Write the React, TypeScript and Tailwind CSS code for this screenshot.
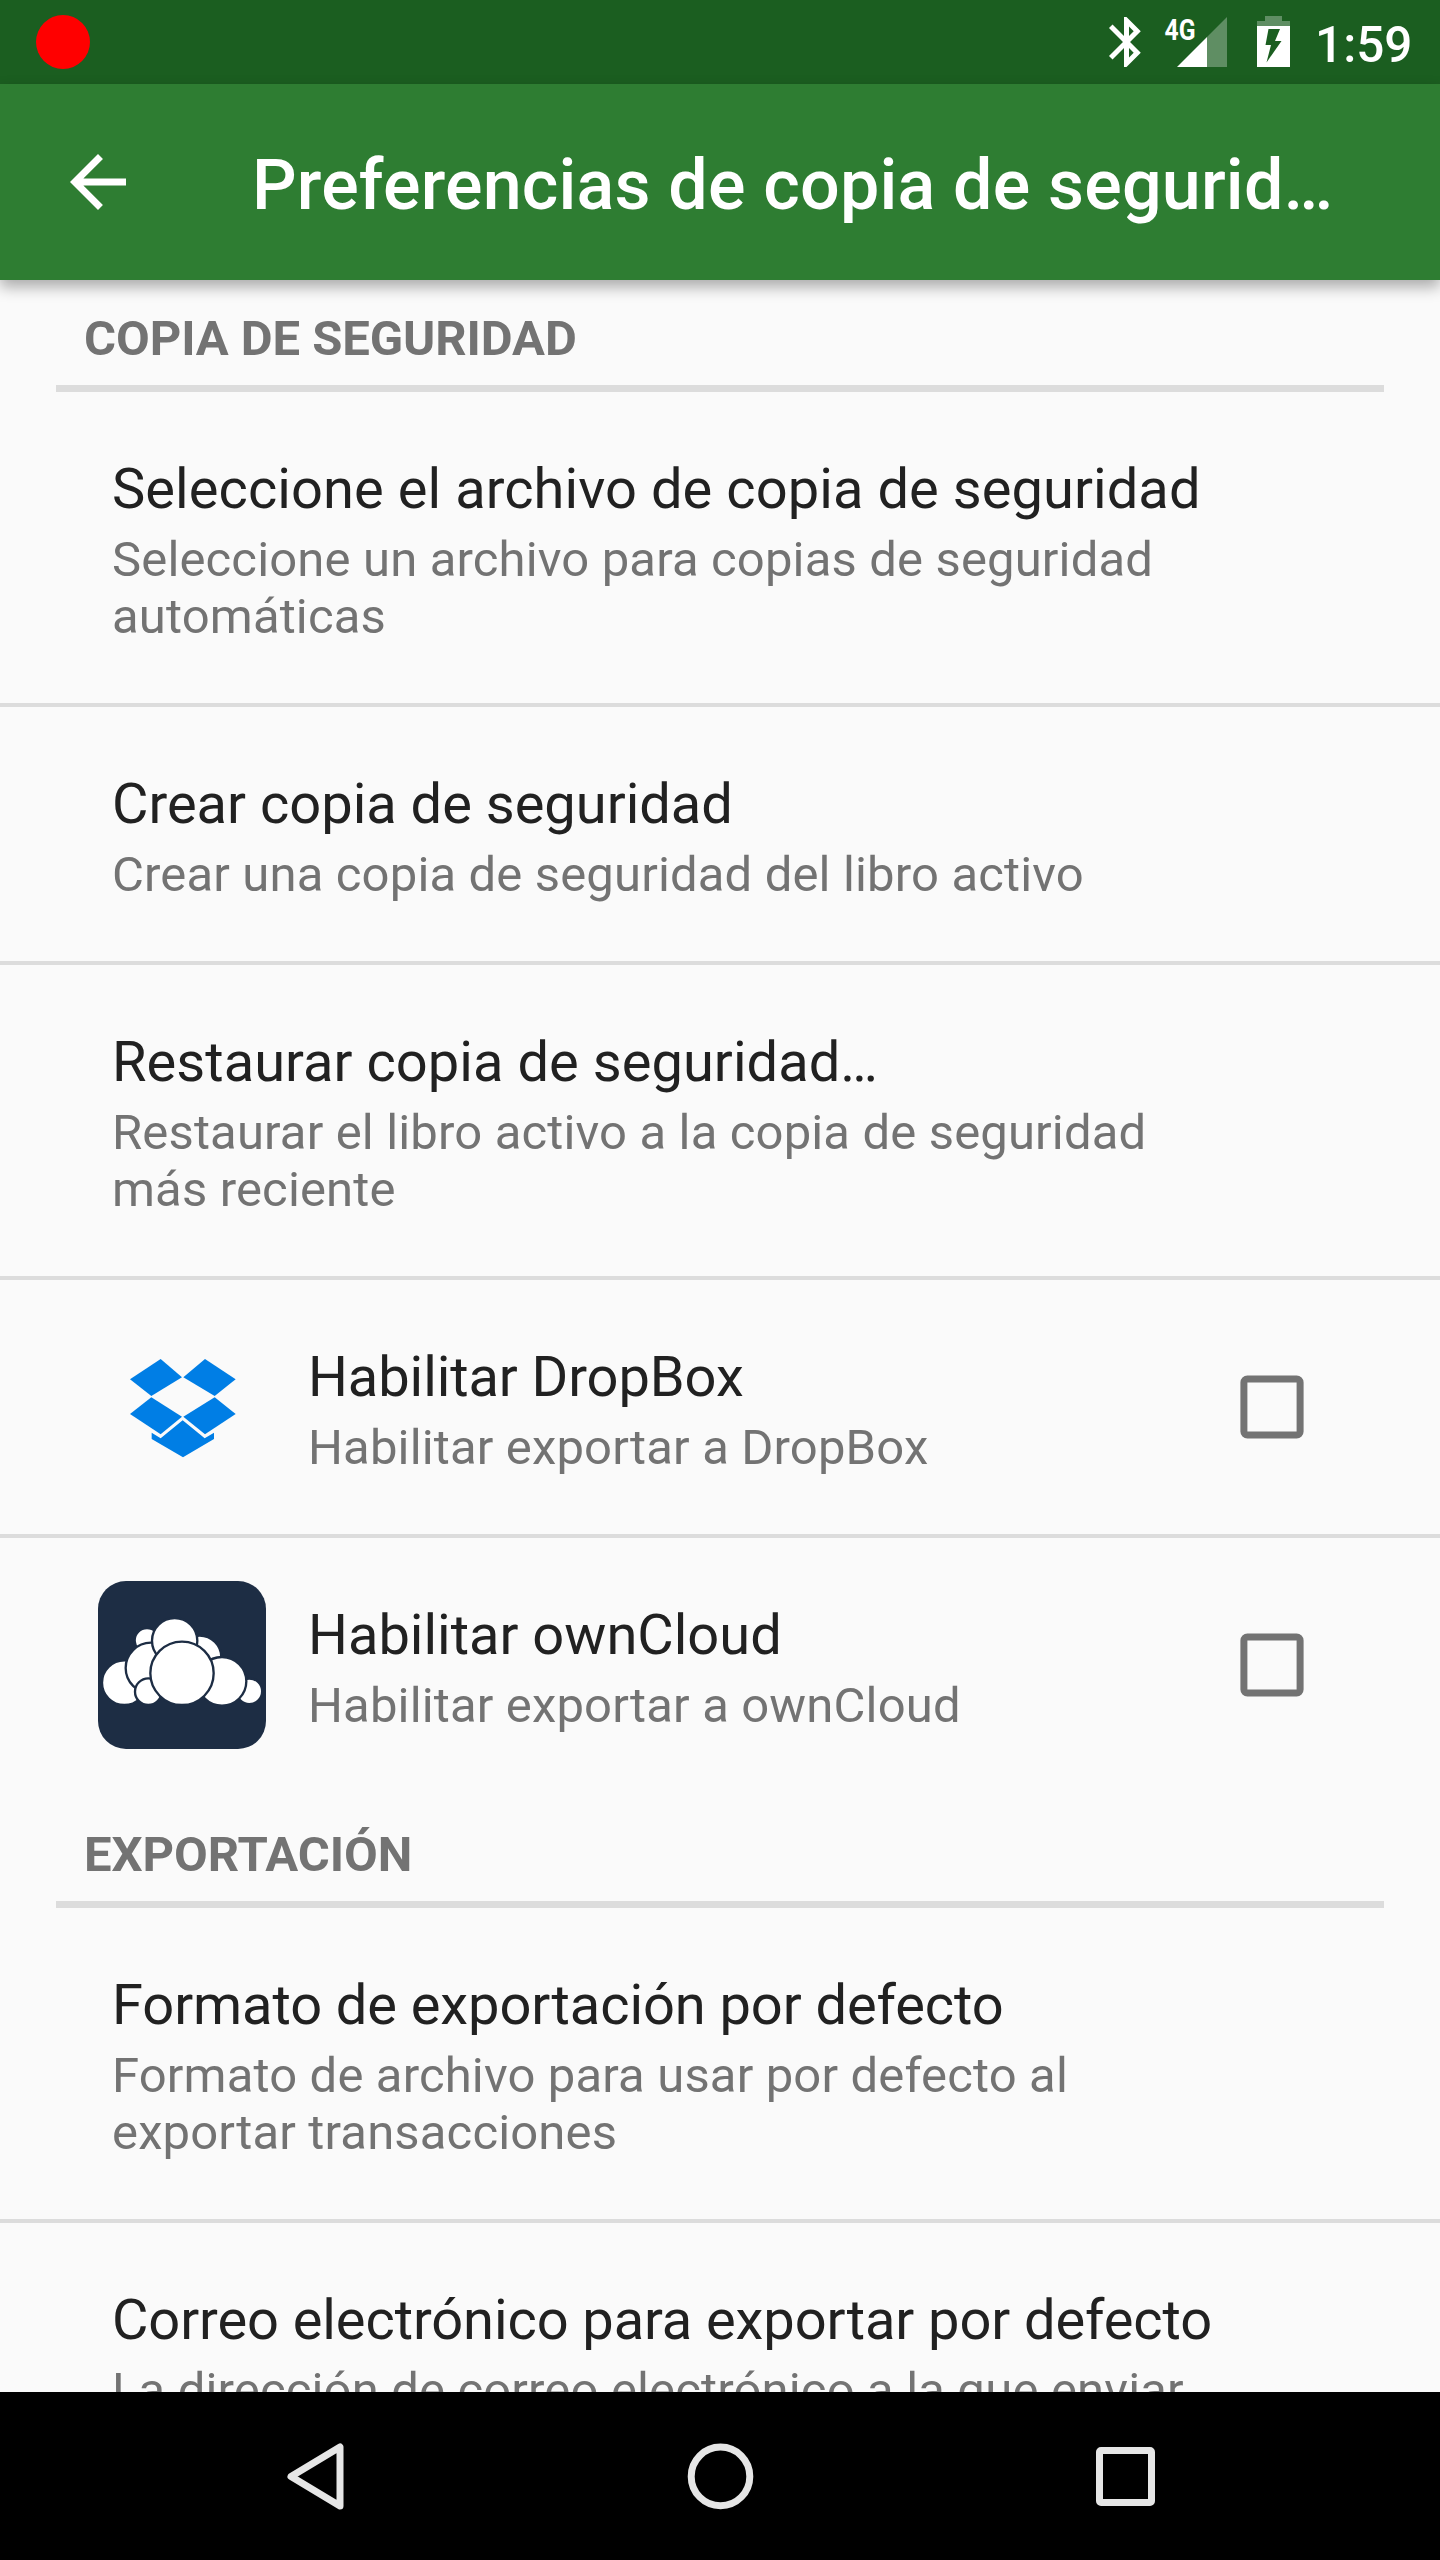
import React from "react";

function StatusBar() {
  return (
    <div className="flex h-[84px] shrink-0 items-center bg-[#1b5e20] pl-9 pr-[28px]">
      <div className="size-[54px] rounded-full bg-[#ff0000]" />
      <svg className="ml-auto h-[84px] w-[230px] fill-white" viewBox="1080 0 230 84">
        <path
          transform="translate(1096.5 12) scale(2.5)"
          d="M17.71 7.71L12 2h-1v7.59L6.41 5 5 6.41 10.59 12 5 17.59 6.41 19 11 14.41V22h1l5.71-5.71-4.3-4.29 4.3-4.29zM13 5.83l1.88 1.88L13 9.59V5.83zm1.88 10.46L13 18.17v-3.76l1.88 1.88z"
        />
        <text x="1164.5" y="39.5" fontSize="29" fontWeight="700" textLength="31" lengthAdjust="spacingAndGlyphs" fontFamily="Roboto, sans-serif">
          4G
        </text>
        <path opacity=".3" d="M1207 37L1227 17V67H1207z" />
        <path d="M1177 67L1207 37V67z" />
        <path opacity=".3" d="M1257 26V21H1265V16H1282V21H1290V26z" />
        <path fillRule="evenodd" d="M1257 26H1290V67H1257zM1268.5 29L1265.5 45H1271L1266.5 62.5L1281.5 41H1275L1280 29z" />
      </svg>
      <span className="ml-[5px] mt-[5px] w-[97px] text-[49.5px] font-medium leading-[84px] text-white">1:59</span>
    </div>
  );
}

function Toolbar() {
  return (
    <header className="relative z-10 flex h-[196px] shrink-0 items-center bg-[#2e7d32] pl-14 pr-[104px] shadow-[0_7px_14px_rgba(0,0,0,0.32)]">
      <svg className="size-[84px] shrink-0 fill-white" viewBox="0 0 24 24">
        <path d="M20 11H7.83l5.59-5.59L12 4l-8 8 8 8 1.41-1.41L7.83 13H20v-2z" />
      </svg>
      <h1 className="ml-28 mt-[5px] whitespace-nowrap text-[70px] font-medium leading-[82px] tracking-[0.2px] text-white">
        Preferencias de copia de segurid…
      </h1>
    </header>
  );
}

function SectionHeader({ children }: { children: string }) {
  return (
    <div className="mx-14 flex h-[112px] items-center border-b-[7px] border-[#dcdcdc] px-7">
      <h2 className="mt-[11px] text-[49px] font-bold leading-[57px] tracking-[-0.08px] text-[#737373]">{children}</h2>
    </div>
  );
}

type RowProps = {
  title: string;
  lines: string[];
  icon?: React.ReactNode;
  last?: boolean;
  tracking?: string;
};

function Checkbox() {
  return (
    <svg className="ml-auto mr-[126px] size-[84px] shrink-0 fill-none stroke-[#737373]" viewBox="0 0 84 84">
      <rect x="13.900" y="13.900" width="56.200" height="56.200" rx="3.500" strokeWidth="7" />
    </svg>
  );
}

function Row({ title, lines, icon, last, tracking = "" }: RowProps) {
  return (
    <div className={`flex items-center border-b-4 ${icon ? "pl-[98px]" : "pl-28"} ${last ? "border-transparent" : "border-[#dcdcdc]"}`}>
      {icon}
      <div className={`pb-[58px] pt-16 ${icon ? "ml-[42px]" : ""}`}>
        <h3 className={`whitespace-nowrap text-[56px] leading-[66px] text-[#212121] ${tracking}`}>{title}</h3>
        <div className="mt-[9px] text-[49px] leading-[57px] tracking-[0.15px] text-[#737373]">
          {lines.map((line) => (
            <p key={line} className="whitespace-nowrap">{line}</p>
          ))}
        </div>
      </div>
      {icon && <Checkbox />}
    </div>
  );
}

function DropboxIcon() {
  return (
    <svg className="size-[168px] shrink-0 fill-[#007ee5]" viewBox="54 -21 504 504">
      <path d="M242 87L306 142L214 198L150 148z" />
      <path d="M375 87L467 148L404 198L310 142z" />
      <path d="M214 202L306 260L242 313L150 252z" />
      <path d="M404 202L467 252L375 313L310 260z" />
      <path d="M308 271L374 325L402 308V327L309 382L215 327V308L242 325z" />
    </svg>
  );
}

function OwnCloudIcon() {
  return (
    <svg className="size-[168px] shrink-0" viewBox="54 63 504 504">
      <rect x="54" y="63" width="504" height="504" rx="84" fill="#1d2d44" />
      <g fill="#fff" stroke="#1d2d44" strokeWidth="7">
        <circle cx="508" cy="394" r="38.500" />
        <circle cx="201" cy="241" r="37" />
        <circle cx="359" cy="292" r="65" />
        <circle cx="133" cy="368" r="67" />
        <circle cx="213" cy="324" r="76" />
        <circle cx="284" cy="242" r="68" />
        <circle cx="205" cy="395" r="40" />
        <circle cx="426" cy="364" r="73" />
        <circle cx="306" cy="340" r="95" />
      </g>
    </svg>
  );
}

function NavBar() {
  return (
    <nav className="flex h-[168px] shrink-0 items-center justify-center gap-[321px] bg-black">
      <svg className="size-[84px] fill-none stroke-[#e6e6e6]" viewBox="0 0 84 84">
        <path d="M67 13V72L18 42.500z" strokeWidth="7" strokeLinejoin="round" />
      </svg>
      <svg className="size-[84px] fill-none stroke-[#e6e6e6]" viewBox="0 0 84 84">
        <circle cx="42.500" cy="42.400" r="29.300" strokeWidth="7" />
      </svg>
      <svg className="size-[84px] fill-none stroke-[#e6e6e6]" viewBox="0 0 84 84">
        <rect x="16.500" y="16.500" width="52" height="52" rx="1.500" strokeWidth="7" />
      </svg>
    </nav>
  );
}

export default function App() {
  return (
    <div className="flex h-[2560px] w-[1440px] flex-col overflow-hidden bg-[#fafafa] font-['Roboto',sans-serif]">
      <StatusBar />
      <Toolbar />
      <main className="min-h-0 flex-1 overflow-hidden">
        <SectionHeader>COPIA DE SEGURIDAD</SectionHeader>
        <Row
          title="Seleccione el archivo de copia de seguridad"
          lines={["Seleccione un archivo para copias de seguridad", "automáticas"]}
          tracking="tracking-[0.07px]"
        />
        <Row title="Crear copia de seguridad" lines={["Crear una copia de seguridad del libro activo"]} />
        <Row
          title="Restaurar copia de seguridad…"
          lines={["Restaurar el libro activo a la copia de seguridad", "más reciente"]}
          tracking="tracking-[0.05px]"
        />
        <Row
          title="Habilitar DropBox"
          lines={["Habilitar exportar a DropBox"]}
          icon={<DropboxIcon />}
          tracking="tracking-[-0.08px]"
        />
        <Row title="Habilitar ownCloud" lines={["Habilitar exportar a ownCloud"]} icon={<OwnCloudIcon />} last />
        <SectionHeader>EXPORTACIÓN</SectionHeader>
        <Row
          title="Formato de exportación por defecto"
          lines={["Formato de archivo para usar por defecto al", "exportar transacciones"]}
          tracking="tracking-[-0.08px]"
        />
        <Row
          title="Correo electrónico para exportar por defecto"
          lines={["La dirección de correo electrónico a la que enviar"]}
          tracking="tracking-[-0.09px]"
        />
      </main>
      <NavBar />
    </div>
  );
}
